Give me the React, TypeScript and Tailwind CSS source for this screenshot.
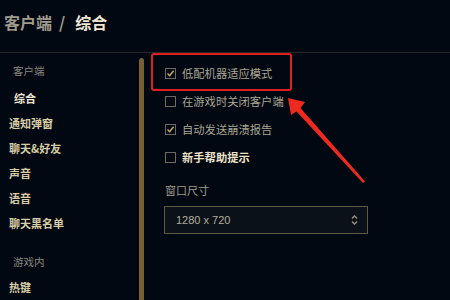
import React from "react";

const FONT = { fontFamily: '"Noto Sans CJK SC", "Noto Sans", sans-serif' };

type NavItem = { label: string; kind: "group" | "active" | "item" };

const navItems: NavItem[] = [
  { label: "客户端", kind: "group" },
  { label: "综合", kind: "active" },
  { label: "通知弹窗", kind: "item" },
  { label: "聊天&好友", kind: "item" },
  { label: "声音", kind: "item" },
  { label: "语音", kind: "item" },
  { label: "聊天黑名单", kind: "item" },
  { label: "游戏内", kind: "group" },
  { label: "热键", kind: "item" },
];

const options = [
  { label: "低配机器适应模式", checked: true, strong: false },
  { label: "在游戏时关闭客户端", checked: false, strong: false },
  { label: "自动发送崩溃报告", checked: true, strong: false },
  { label: "新手帮助提示", checked: false, strong: true },
];

function Checkbox({ checked }: { checked: boolean }) {
  return (
    <span className="flex h-[11px] w-[11px] shrink-0 items-center justify-center border border-[#6a6860] bg-[#05090f]">
      {checked && (
        <svg width="9" height="9" viewBox="0 0 9 9" fill="none">
          <path d="M1.5 4.6 L3.6 6.8 L7.6 1.8" stroke="#c8aa6e" strokeWidth="1.4" />
        </svg>
      )}
    </span>
  );
}

export default function App() {
  return (
    <div
      className="relative h-[300px] w-[450px] overflow-hidden bg-[#020812]"
      style={FONT}
    >
      <div className="flex h-[53px] items-start border-b border-[#23272c] pl-[4px] pt-[9px] text-[16px] font-bold leading-[26px]">
        <span className="text-[#a09b8c]">客户端</span>
        <span className="ml-[7px] mr-[10px] text-[#a09b8c]">/</span>
        <span className="text-[#f0e6d2]">综合</span>
      </div>

      <div className="flex h-[247px]">
        <nav className="flex w-[139px] flex-col pt-[5px]">
          {navItems.map((item, i) => {
            if (item.kind === "group") {
              return (
                <div
                  key={item.label}
                  className={`flex h-[26px] items-center pl-[13px] text-[10.5px] text-[#8a877e] ${
                    i > 0 ? "mt-[12px] h-[28px]" : "mb-[3px]"
                  }`}
                >
                  {item.label}
                </div>
              );
            }
            return (
              <div
                key={item.label}
                className={`flex h-[26px] items-center text-[11px] font-bold ${
                  item.kind === "active"
                    ? "pl-[14px] text-[#f0e6d2]"
                    : "pl-[9px] text-[#d8cca4]"
                }`}
              >
                {item.label}
              </div>
            );
          })}
        </nav>

        <div className="mt-[5px] w-[5px] rounded-t-[3px] bg-[#7a5f34]" />

        <section className="flex flex-1 flex-col pl-[21px] pt-[6px]">
          {options.map((opt) => (
            <label key={opt.label} className="flex h-[28px] items-center gap-[6px]">
              <Checkbox checked={opt.checked} />
              <span
                className={`text-[11.3px] ${
                  opt.strong ? "font-bold text-[#ece2c9]" : "text-[#aaa592]"
                }`}
              >
                {opt.label}
              </span>
            </label>
          ))}

          <div className="mt-[11px] text-[11px] leading-[16px] text-[#a09b8c]">窗口尺寸</div>

          <div className="ml-[-1px] mt-[8px] flex h-[28px] w-[204px] items-center justify-between border border-[#5f5847] bg-[#0b1118] pl-[11px] pr-[9px]">
            <span className="text-[11px] text-[#b3ad9c]" style={{ fontFamily: '"Liberation Sans", sans-serif' }}>
              1280 x 720
            </span>
            <svg width="7" height="12" viewBox="0 0 7 12" fill="none">
              <path d="M1 4.5 L3.5 1.8 L6 4.5" stroke="#a09b8c" strokeWidth="1.2" />
              <path d="M1 7.5 L3.5 10.2 L6 7.5" stroke="#a09b8c" strokeWidth="1.2" />
            </svg>
          </div>
        </section>
      </div>

      <div className="absolute left-[151px] top-[53px] h-[38px] w-[141px] rounded-[3px] border-[2.5px] border-[#e0201c]" />

      <svg className="absolute left-0 top-0" width="450" height="300" viewBox="0 0 450 300">
        <polygon
          points="288,98 305,102 300.5,108 365,181.5 363,183 296.5,111.5 291,115"
          fill="#ee2a20"
        />
      </svg>
    </div>
  );
}
